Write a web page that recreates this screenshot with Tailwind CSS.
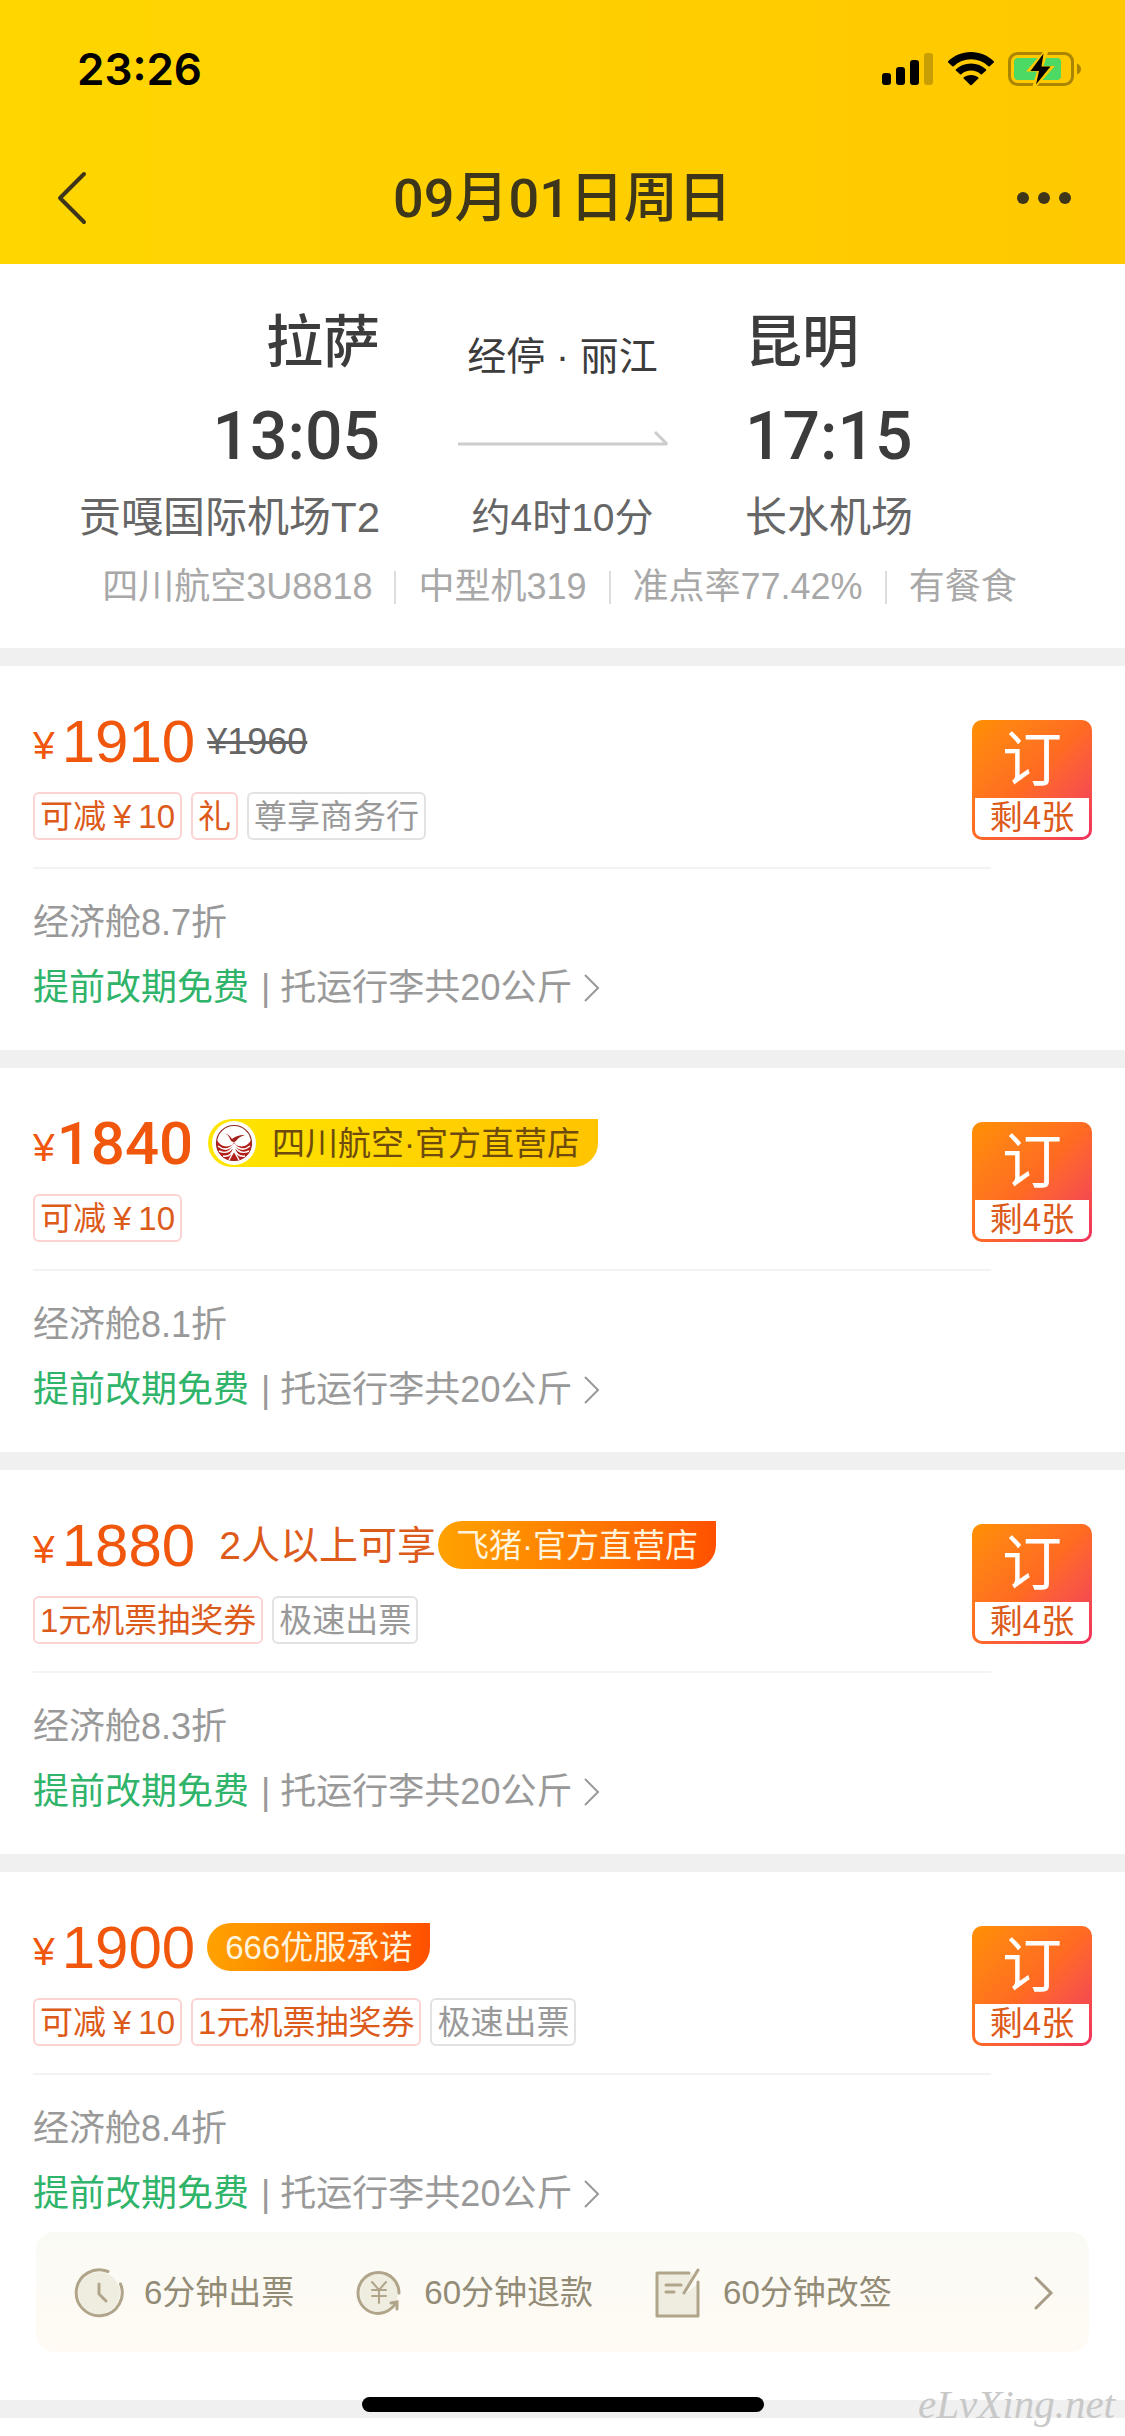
<!DOCTYPE html>
<html lang="zh-CN">
<head>
    <meta charset="UTF-8">
    <meta name="viewport" content="width=device-width, initial-scale=1.0">
    <title>拉萨 - 昆明 航班报价</title>
    <script src="https://cdn.jsdelivr.net/npm/@tailwindcss/browser@4"></script>
</head>
<body class="bg-white font-['Liberation_Sans','Noto_Sans_CJK_SC',sans-serif] text-[#999]">
    <div class="relative min-h-screen overflow-hidden">

        <!-- 顶部：状态栏和标题 -->
        <header class="bg-linear-to-r from-[#ffd600] to-[#ffc800]">
            <div class="flex h-[132px] items-center justify-between pt-[6px] pr-[43px] pl-[77px]">
                <span class="font-['Inter',sans-serif] text-[44px] leading-[48px] font-semibold text-black">23:26</span>
                <div class="flex items-center gap-[14px]">
                    <svg class="h-[34px] w-[52px]" viewBox="0 0 52 34">
                        <rect x="0" y="21" width="9" height="12" rx="3" />
                        <rect x="14" y="15" width="9" height="18" rx="3" />
                        <rect x="28" y="8" width="9" height="25" rx="3" />
                        <rect x="42" y="1" width="9" height="32" rx="3" fill="#c79f04" />
                    </svg>
                    <svg class="h-[34px] w-[46px]" viewBox="0 0 46 34">
                        <path d="M23 0C14 0 6 3.500 0 9.300Q-.3 10 .2 10.500L4.300 14.200Q5 14.700 5.600 14.200A25.500 25.500 0 0 1 40.400 14.200Q41 14.700 41.700 14.200L45.800 10.500Q46.300 10 45.800 9.300C40 3.500 32 0 23 0Z" />
                        <path d="M23 11.500C17 11.500 11.800 13.800 7.800 17.400Q7.400 18 7.900 18.500L12 22.200Q12.600 22.700 13.300 22.200A14.500 14.500 0 0 1 32.700 22.200Q33.400 22.700 34 22.200L38.100 18.500Q38.600 18 38.200 17.400C34.200 13.800 29 11.500 23 11.500Z" />
                        <path d="M23 23C20 23 17.500 24 15.600 25.600Q15.200 26.100 15.700 26.600L22.300 33Q23 33.600 23.700 33L30.300 26.600Q30.800 26.100 30.400 25.600C28.500 24 26 23 23 23Z" />
                    </svg>
                    <svg class="h-[34px] w-[74px]" viewBox="0 0 74 34">
                        <rect x="1.500" y="1.500" width="63" height="31" rx="8" fill="none" stroke="#a98503" stroke-width="3" />
                        <path d="M69 11.500Q73 13.500 73 17T69 22.500Z" fill="#a98503" />
                        <rect x="6" y="6" width="47" height="22" rx="4" fill="#4cd964" />
                        <path d="M35 0L18 19.500H29L24.500 34H29L47 14H35.500L40 0Z" fill="#ffca00" />
                        <path d="M35.500 1.500L22.500 19H31L28 32.500L42.500 14.500H33.500Z" />
                    </svg>
                </div>
            </div>
            <div class="flex h-[132px] items-center justify-between px-[52px]">
                <button type="button" aria-label="返回" class="w-[60px]">
                    <svg class="h-[60px] w-[40px]" viewBox="0 0 40 60" fill="none" stroke="#3d361a" stroke-width="4" stroke-linecap="round" stroke-linejoin="round">
                        <path d="M32 6L8 30L32 54" />
                    </svg>
                </button>
                <h1 class="pt-[2px] font-['Roboto','Noto_Sans_CJK_SC',sans-serif] text-[54px] leading-[66px] font-medium text-[#3d361a]">09月01日周日</h1>
                <button type="button" aria-label="更多" class="w-[60px]">
                    <svg class="ml-auto h-[14px] w-[58px]" viewBox="0 0 58 14" fill="#3d361a">
                        <circle cx="8" cy="7" r="6" />
                        <circle cx="29" cy="7" r="6" />
                        <circle cx="50" cy="7" r="6" />
                    </svg>
                </button>
            </div>
        </header>

        <!-- 航班信息 -->
        <section class="h-[384px] pt-[45px]">
            <div class="grid grid-cols-[380fr_365fr_380fr] text-[#666]">
                <div class="text-right">
                    <div class="text-[57px] leading-[66px] font-medium text-[#3c3c3c]">拉萨</div>
                    <div class="mt-[23px] font-['Roboto',sans-serif] text-[66px] leading-[78px] font-medium text-[#3c3c3c]">13:05</div>
                    <div class="mt-[18px] text-[42px] leading-[48px]">贡嘎国际机场T2</div>
                </div>
                <div class="flex flex-col items-center">
                    <div class="mt-[24px] text-[39px] leading-[48px] text-[#3c3c3c]">经停 · 丽江</div>
                    <svg class="mt-[49px] h-[16px] w-[212px]" viewBox="0 0 212 16" fill="none" stroke="#ccc" stroke-width="3">
                        <path d="M1 14H210L198 2" stroke-linejoin="bevel" />
                    </svg>
                    <div class="mt-[48px] text-[39px] leading-[48px]">约4时10分</div>
                </div>
                <div>
                    <div class="text-[57px] leading-[66px] font-medium text-[#3c3c3c]">昆明</div>
                    <div class="mt-[23px] font-['Roboto',sans-serif] text-[66px] leading-[78px] font-medium text-[#3c3c3c]">17:15</div>
                    <div class="mt-[18px] text-[42px] leading-[48px]">长水机场</div>
                </div>
            </div>
            <div class="mt-[24px] flex items-center justify-center gap-[22px] pr-[6px] text-[36px] leading-[42px] whitespace-nowrap text-[#a8a8a8]">
                <span>四川航空3U8818</span>
                <i class="h-[33px] w-[2px] bg-[#ddd]"></i>
                <span>中型机319</span>
                <i class="h-[33px] w-[2px] bg-[#ddd]"></i>
                <span>准点率77.42%</span>
                <i class="h-[33px] w-[2px] bg-[#ddd]"></i>
                <span>有餐食</span>
            </div>
        </section>

        <!-- 报价列表 -->
        <main>
            <article class="border-t-[18px] border-[#f0f0f0] pb-[41px] pl-[33px]">
                <div class="flex justify-between pt-[51px] pr-[33px]">
                    <div>
                        <div class="flex h-[48px] items-center text-[#f0560c]">
                            <span class="mt-[10px] text-[39px] leading-[48px]">¥</span>
                            <strong class="mt-[2px] ml-[7px] text-[60px] leading-[48px] font-normal">1910</strong>
                            <del class="mt-[2px] ml-[12px] text-[36px] leading-[48px] text-[#666]">¥1960</del>
                        </div>
                        <div class="mt-[27px] flex gap-[9px] text-[33px] leading-[42px]">
                            <span class="rounded-[6px] border-2 border-[#fbd3d3] px-[5px] pt-[2px] text-[#dc5a1a]">可减<span class="mx-[7px]">¥</span>10</span>
                            <span class="rounded-[6px] border-2 border-[#fbd3d3] px-[5px] pt-[2px] text-[#dc5a1a]">礼</span>
                            <span class="rounded-[6px] border-2 border-[#e2e2e2] px-[5px] pt-[2px]">尊享商务行</span>
                        </div>
                    </div>
                    <button type="button" class="mt-[3px] flex h-[120px] w-[120px] flex-col rounded-[10px] bg-linear-to-br from-[#ff9000] via-[#ff6a22] to-[#f0305c] p-[3px]">
                        <span class="h-[75px] w-full text-[60px] leading-[75px] text-white">订</span>
                        <span class="h-[39px] w-full rounded-b-[7px] bg-white text-[33px] leading-[39px] text-[#dc5a1a]">剩4张</span>
                    </button>
                </div>
                <hr class="mt-[27px] mr-[134px] border-t-2 border-[#f3f3f3]">
                <p class="mt-[33px] text-[36px] leading-[42px]">经济舱8.7折</p>
                <a href="#" class="mt-[23px] flex items-center text-[36px] leading-[42px]">
                    <span class="text-[#2fb46a]">提前改期免费</span>
                    <span class="ml-[12px]">| 托运行李共20公斤</span>
                    <svg class="ml-[11px] h-[30px] w-[18px]" viewBox="0 0 18 30" fill="none" stroke="#999" stroke-width="2"><path d="M2 2L15 15L2 28" /></svg>
                </a>
            </article>

            <article class="border-t-[18px] border-[#f0f0f0] pb-[41px] pl-[33px]">
                <div class="flex justify-between pt-[51px] pr-[33px]">
                    <div>
                        <div class="flex h-[48px] items-center text-[#f0560c]">
                            <span class="mt-[10px] text-[39px] leading-[48px]">¥</span>
                            <strong class="mt-[2px] ml-[2px] font-['Roboto',sans-serif] text-[60px] leading-[48px] font-medium">1840</strong>
                            <span class="ml-[15px] flex h-[48px] items-center rounded-l-[24px] rounded-br-[24px] bg-linear-to-r from-[#ffe600] to-[#ffc400] pr-[18px] pl-[4px] text-[33px] leading-[48px] text-[#6e4b0c]">
                                <svg class="mr-[16px] h-[44px] w-[44px]" viewBox="0 0 44 44" fill="none">
                                    <circle cx="22" cy="22" r="22" fill="#fff" />
                                    <circle cx="22" cy="22" r="17.500" stroke="#8d2a22" stroke-width="1.200" />
                                    <path d="M5 19C8 25 14 27 20 24L22 21L24 24C30 27 36 25 39 19C41 30 34 39.500 22 39.500S3 30 5 19Z" fill="#b3201c" />
                                    <path d="M6 25C12 30 17 29 22 23C27 29 32 30 38 25M7 30C13 33 18 31 22 25C26 31 31 33 37 30M11 35C16 36 20 33 22 27C24 33 28 36 33 35M17 39L22 30L27 39" stroke="#fff" stroke-width="1.400" />
                                    <path d="M12 12C16 13 18 15 20 18C23 16 26 14 33 14C29 15 26 17 24 20C22 22 19 21 18 18C17 15 15 13 12 12Z" fill="#a3201c" />
                                </svg>
                                <span class="pt-[2px]">四川航空·官方直营店</span>
                            </span>
                        </div>
                        <div class="mt-[27px] flex gap-[9px] text-[33px] leading-[42px]">
                            <span class="rounded-[6px] border-2 border-[#fbd3d3] px-[5px] pt-[2px] text-[#dc5a1a]">可减<span class="mx-[7px]">¥</span>10</span>
                        </div>
                    </div>
                    <button type="button" class="mt-[3px] flex h-[120px] w-[120px] flex-col rounded-[10px] bg-linear-to-br from-[#ff9000] via-[#ff6a22] to-[#f0305c] p-[3px]">
                        <span class="h-[75px] w-full text-[60px] leading-[75px] text-white">订</span>
                        <span class="h-[39px] w-full rounded-b-[7px] bg-white text-[33px] leading-[39px] text-[#dc5a1a]">剩4张</span>
                    </button>
                </div>
                <hr class="mt-[27px] mr-[134px] border-t-2 border-[#f3f3f3]">
                <p class="mt-[33px] text-[36px] leading-[42px]">经济舱8.1折</p>
                <a href="#" class="mt-[23px] flex items-center text-[36px] leading-[42px]">
                    <span class="text-[#2fb46a]">提前改期免费</span>
                    <span class="ml-[12px]">| 托运行李共20公斤</span>
                    <svg class="ml-[11px] h-[30px] w-[18px]" viewBox="0 0 18 30" fill="none" stroke="#999" stroke-width="2"><path d="M2 2L15 15L2 28" /></svg>
                </a>
            </article>

            <article class="border-t-[18px] border-[#f0f0f0] pb-[41px] pl-[33px]">
                <div class="flex justify-between pt-[51px] pr-[33px]">
                    <div>
                        <div class="flex h-[48px] items-center text-[#f0560c]">
                            <span class="mt-[10px] text-[39px] leading-[48px]">¥</span>
                            <strong class="mt-[2px] ml-[7px] text-[60px] leading-[48px] font-normal">1880</strong>
                            <span class="mt-[2px] ml-[24px] text-[39px] leading-[48px] text-[#dc5a1a]">2人以上可享</span>
                            <span class="ml-[2px] h-[48px] rounded-l-[24px] rounded-br-[24px] bg-linear-to-r from-[#ffa200] to-[#ff5000] px-[18px] text-[33px] leading-[50px] text-[#fff3dc]">飞猪·官方直营店</span>
                        </div>
                        <div class="mt-[27px] flex gap-[9px] text-[33px] leading-[42px]">
                            <span class="rounded-[6px] border-2 border-[#fbd3d3] px-[5px] pt-[2px] text-[#dc5a1a]">1元机票抽奖券</span>
                            <span class="rounded-[6px] border-2 border-[#e2e2e2] px-[5px] pt-[2px]">极速出票</span>
                        </div>
                    </div>
                    <button type="button" class="mt-[3px] flex h-[120px] w-[120px] flex-col rounded-[10px] bg-linear-to-br from-[#ff9000] via-[#ff6a22] to-[#f0305c] p-[3px]">
                        <span class="h-[75px] w-full text-[60px] leading-[75px] text-white">订</span>
                        <span class="h-[39px] w-full rounded-b-[7px] bg-white text-[33px] leading-[39px] text-[#dc5a1a]">剩4张</span>
                    </button>
                </div>
                <hr class="mt-[27px] mr-[134px] border-t-2 border-[#f3f3f3]">
                <p class="mt-[33px] text-[36px] leading-[42px]">经济舱8.3折</p>
                <a href="#" class="mt-[23px] flex items-center text-[36px] leading-[42px]">
                    <span class="text-[#2fb46a]">提前改期免费</span>
                    <span class="ml-[12px]">| 托运行李共20公斤</span>
                    <svg class="ml-[11px] h-[30px] w-[18px]" viewBox="0 0 18 30" fill="none" stroke="#999" stroke-width="2"><path d="M2 2L15 15L2 28" /></svg>
                </a>
            </article>

            <article class="border-y-[18px] border-[#f0f0f0] pb-[48px] pl-[33px]">
                <div class="flex justify-between pt-[51px] pr-[33px]">
                    <div>
                        <div class="flex h-[48px] items-center text-[#f0560c]">
                            <span class="mt-[10px] text-[39px] leading-[48px]">¥</span>
                            <strong class="mt-[2px] ml-[7px] text-[60px] leading-[48px] font-normal">1900</strong>
                            <span class="ml-[12px] h-[48px] rounded-l-[24px] rounded-br-[24px] bg-linear-to-r from-[#ffa200] to-[#ff5000] px-[18px] text-[33px] leading-[50px] text-[#fff3dc]">666优服承诺</span>
                        </div>
                        <div class="mt-[27px] flex gap-[9px] text-[33px] leading-[42px]">
                            <span class="rounded-[6px] border-2 border-[#fbd3d3] px-[5px] pt-[2px] text-[#dc5a1a]">可减<span class="mx-[7px]">¥</span>10</span>
                            <span class="rounded-[6px] border-2 border-[#fbd3d3] px-[5px] pt-[2px] text-[#dc5a1a]">1元机票抽奖券</span>
                            <span class="rounded-[6px] border-2 border-[#e2e2e2] px-[5px] pt-[2px]">极速出票</span>
                        </div>
                    </div>
                    <button type="button" class="mt-[3px] flex h-[120px] w-[120px] flex-col rounded-[10px] bg-linear-to-br from-[#ff9000] via-[#ff6a22] to-[#f0305c] p-[3px]">
                        <span class="h-[75px] w-full text-[60px] leading-[75px] text-white">订</span>
                        <span class="h-[39px] w-full rounded-b-[7px] bg-white text-[33px] leading-[39px] text-[#dc5a1a]">剩4张</span>
                    </button>
                </div>
                <hr class="mt-[27px] mr-[134px] border-t-2 border-[#f3f3f3]">
                <p class="mt-[33px] text-[36px] leading-[42px]">经济舱8.4折</p>
                <a href="#" class="mt-[23px] flex items-center text-[36px] leading-[42px]">
                    <span class="text-[#2fb46a]">提前改期免费</span>
                    <span class="ml-[12px]">| 托运行李共20公斤</span>
                    <svg class="ml-[11px] h-[30px] w-[18px]" viewBox="0 0 18 30" fill="none" stroke="#999" stroke-width="2"><path d="M2 2L15 15L2 28" /></svg>
                </a>

                <!-- 服务承诺 -->
                <a href="#" class="mt-[17px] mr-[36px] ml-[3px] flex h-[120px] items-center rounded-[18px] bg-linear-to-b from-[#fafaf4] to-[#fffaf4] pt-[2px] pr-[35px] pl-[38px] text-[33px] leading-[42px] text-[#928b76]">
                    <svg class="h-[50px] w-[50px]" viewBox="0 0 50 50" fill="none" stroke="#b0a58a" stroke-width="3" stroke-linecap="round">
                        <circle cx="25" cy="25" r="21" fill="#efece0" stroke="none" />
                        <path d="M34 3.500A23 23 0 1 0 46.500 16" />
                        <path d="M25 16V26L32 33" />
                    </svg>
                    <span class="ml-[20px]">6分钟出票</span>
                    <svg class="ml-[61px] h-[50px] w-[50px]" viewBox="0 0 50 50" fill="none" stroke="#b0a58a" stroke-width="3" stroke-linecap="round">
                        <circle cx="24" cy="25" r="19" fill="#efece0" stroke="none" />
                        <path d="M44 25A20.500 20.500 0 1 0 23.500 45.500C31 45.500 37 41 42 34M36 35L42 34L42 41" />
                        <path d="M17 14L24 22L31 14M24 22V35M17 22H31M17 28H31" stroke-width="2" />
                    </svg>
                    <span class="ml-[19px]">60分钟退款</span>
                    <svg class="ml-[60px] h-[50px] w-[50px]" viewBox="0 0 50 50" fill="none" stroke="#b0a58a" stroke-width="3" stroke-linecap="round" stroke-linejoin="round">
                        <path d="M4 6H40L32 26L45 16V48H4Z" fill="#efece0" stroke="none" />
                        <path d="M36 5H4V48H45V14" />
                        <path d="M45 2L31 25M13 17H28M13 24H21" />
                    </svg>
                    <span class="ml-[20px]">60分钟改签</span>
                    <svg class="ml-auto h-[34px] w-[20px]" viewBox="0 0 20 34" fill="none" stroke="#a89c86" stroke-width="3" stroke-linecap="round"><path d="M2 2L17 17L2 32" /></svg>
                </a>
            </article>
        </main>

        <div class="absolute bottom-[24px] left-1/2 h-[15px] w-[402px] -translate-x-1/2 rounded-full bg-black"></div>
        <span class="absolute right-[10px] bottom-[8px] font-['Liberation_Serif',serif] text-[41px] leading-[48px] text-[#c8c8c8] italic">eLvXing.net</span>
    </div>
</body>
</html>
